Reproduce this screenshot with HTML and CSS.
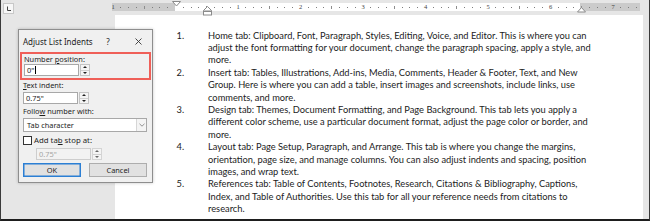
FILE: index.html
```html
<!DOCTYPE html>
<html>
<head>
<meta charset="utf-8">
<link rel="stylesheet" href="styles.css">
</head>
<body>
<div class="frame">
  <div class="topbar">
    <div class="tabsel">
      <svg width="9" height="9" viewBox="0 0 9 9"><path d="M3.5 2.5v4h3.5" fill="none" stroke="#444" stroke-width="1"/></svg>
    </div>
    <div class="ruler">
      <div class="scale">
        <span class="n">1</span><i></i><i></i><i></i><b></b><i></i><i></i><i></i>
        <span class="n"></span><i></i><i></i><i></i><b></b><i></i><i></i><i></i>
        <span class="n">1</span><i></i><i></i><i></i><b></b><i></i><i></i><i></i>
        <span class="n">2</span><i></i><i></i><i></i><b></b><i></i><i></i><i></i>
        <span class="n">3</span><i></i><i></i><i></i><b></b><i></i><i></i><i></i>
        <span class="n">4</span><i></i><i></i><i></i><b></b><i></i><i></i><i></i>
        <span class="n">5</span><i></i><i></i><i></i><b></b><i></i><i></i><i></i>
        <span class="n">6</span><i></i><i></i><i></i><b></b><i></i><i></i><i></i>
        <span class="n">7</span><i></i><i></i><i></i>
      </div>
      <svg class="marker first" width="9" height="6" viewBox="0 0 9 6"><path d="M0.5 0.5h8l-4 4.5z" fill="#fff" stroke="#8a8a8a"/></svg>
      <svg class="marker hang" width="9" height="10" viewBox="0 0 9 10"><path d="M4.5 0.5l4 4v0.5h-8v-0.5z" fill="#fff" stroke="#8a8a8a"/><rect x="0.5" y="5.5" width="8" height="3.5" fill="#fff" stroke="#8a8a8a"/></svg>
      <svg class="marker right" width="9" height="6" viewBox="0 0 9 6"><path d="M4.5 0.5l4 4.5h-8z" fill="#fff" stroke="#8a8a8a"/></svg>
    </div>
  </div>
  <div class="main">
    <div class="gutter-left"></div>
    <div class="page">
      <ol class="list">
        <li class="item"><span class="num">1.</span><span class="txt">Home tab: Clipboard, Font, Paragraph, Styles, Editing, Voice, and Editor. This is where you can<br>adjust the font formatting for your document, change the paragraph spacing, apply a style, and<br>more.</span></li>
        <li class="item"><span class="num">2.</span><span class="txt">Insert tab: Tables, Illustrations, Add-ins, Media, Comments, Header &amp; Footer, Text, and New<br>Group. Here is where you can add a table, insert images and screenshots, include links, use<br>comments, and more.</span></li>
        <li class="item"><span class="num">3.</span><span class="txt">Design tab: Themes, Document Formatting, and Page Background. This tab lets you apply a<br>different color scheme, use a particular document format, adjust the page color or border, and<br>more.</span></li>
        <li class="item"><span class="num">4.</span><span class="txt">Layout tab: Page Setup, Paragraph, and Arrange. This tab is where you change the margins,<br>orientation, page size, and manage columns. You can also adjust indents and spacing, position<br>images, and wrap text.</span></li>
        <li class="item"><span class="num">5.</span><span class="txt">References tab: Table of Contents, Footnotes, Research, Citations &amp; Bibliography, Captions,<br>Index, and Table of Authorities. Use this tab for all your reference needs from citations to<br>research.</span></li>
      </ol>
    </div>
    <div class="gutter-right"></div>
  </div>

  <div class="dialog">
    <div class="titlebar">
      <span class="title">Adjust List Indents</span>
      <span class="help">?</span>
      <span class="close">
        <svg width="7" height="7" viewBox="0 0 7 7"><path d="M0.5 0.5l6 6M6.5 0.5l-6 6" stroke="#333" stroke-width="0.9"/></svg>
      </span>
    </div>
    <div class="highlight">
      <div class="label">Number <u>p</u>osition:</div>
      <div class="spin-row">
        <div class="field">0"<span class="caret"></span></div>
        <div class="spinner"><span class="up"></span><span class="down"></span></div>
      </div>
    </div>
    <div class="body">
      <div class="label gap"><u>T</u>ext indent:</div>
      <div class="spin-row">
        <div class="field">0.75"</div>
        <div class="spinner"><span class="up"></span><span class="down"></span></div>
      </div>
      <div class="label follow">Follo<u>w</u> number with:</div>
      <div class="select">
        <span class="select-text">Tab character</span>
        <span class="select-btn"><svg width="6" height="4" viewBox="0 0 6 4"><path d="M0.5 0.8l2.5 2.4 2.5-2.4" fill="none" stroke="#777" stroke-width="0.8"/></svg></span>
      </div>
      <div class="check-row">
        <span class="checkbox"></span>
        <span class="check-label">Add ta<u>b</u> stop at:</span>
      </div>
      <div class="spin-row disabled">
        <div class="field">0.75"</div>
        <div class="spinner"><span class="up"></span><span class="down"></span></div>
      </div>
      <div class="buttons">
        <button class="btn default">OK</button>
        <button class="btn">Cancel</button>
      </div>
    </div>
  </div>
</div>
</body>
</html>
```

FILE: styles.css
```css
* { box-sizing: border-box; }
html, body { margin: 0; padding: 0; }
body { width: 650px; height: 221px; overflow: hidden; background: #e6e6e6; }

.frame {
  position: relative;
  width: 650px;
  height: 221px;
  border-left: 1px solid #3a3a3a;
  border-right: 1px solid #3a3a3a;
  border-bottom: 2px solid #1e1e1e;
  background: #e6e6e6;
  display: flex;
  flex-direction: column;
  overflow: hidden;
}

/* ---------- ruler ---------- */
.topbar {
  flex: none;
  height: 15px;
  display: flex;
  align-items: flex-start;
  padding: 3px 0 0 2px;
}
.tabsel {
  flex: none;
  width: 11px;
  height: 11px;
  background: #f7f7f7;
  border: 1px solid #c8c8c8;
  display: flex;
  align-items: center;
  justify-content: center;
}
.ruler {
  position: relative;
  flex: none;
  margin-left: 98px;
  width: 528px;
  height: 8px;
  background: linear-gradient(to right, #cbcbcb 0 63px, #fff 63px 468px, #cbcbcb 468px);
  overflow: visible;
}
.scale {
  display: flex;
  height: 8px;
  margin-left: -2.9px;
  width: 531px;
  overflow: hidden;
}
.scale > * {
  flex: none;
  width: 7.8125px;
  height: 8px;
  display: flex;
  align-items: center;
  justify-content: center;
}
.scale .n {
  font: 6.5px/8px "Liberation Serif", serif;
  color: #444;
}
.scale i::before {
  content: "";
  display: block;
  width: 1px;
  height: 1px;
  background: #7d7d7d;
}
.scale b::before {
  content: "";
  display: block;
  width: 1px;
  height: 3px;
  background: #8d8d8d;
}
.marker { position: absolute; display: block; }
.marker.first { left: 59.5px; top: -2px; }
.marker.hang { left: 90.5px; top: 3px; }
.marker.right { left: 464.5px; top: 4px; }

/* ---------- page ---------- */
.main {
  flex: 1;
  display: flex;
  min-height: 0;
}
.gutter-left { flex: none; width: 114px; }
.gutter-right { flex: none; width: 6px; }
.page {
  flex: none;
  width: 528px;
  background: #fff;
  padding: 14.5px 0 0 61.5px;
}
.list {
  margin: 0;
  padding: 0;
  list-style: none;
  font-family: "Lato", "Carlito", sans-serif;
  font-size: 9.3px;
  line-height: 12.4px;
  color: #1c1c1c;
}
.item { display: flex; }
.num { flex: none; width: 31.5px; }
.txt { flex: none; width: 380px; white-space: nowrap; }

/* ---------- dialog ---------- */
.dialog {
  position: absolute;
  left: 17px;
  top: 29px;
  width: 135px;
  border: 1px solid #8e8e8e;
  background: #f0f0f0;
  box-shadow: 0 0 3px rgba(0, 0, 0, 0.22);
  font-family: "Noto Sans", "Open Sans", sans-serif;
  font-size: 7.4px;
  color: #1e1e1e;
  padding-bottom: 5px;
}
.titlebar {
  height: 22px;
  display: flex;
  align-items: center;
  padding-left: 4px;
}
.title { font-size: 8px; }
.help { margin-left: auto; font-size: 8px; width: 6px; text-align: center; }
.close { margin-left: 24px; margin-right: 10px; display: flex; }

.highlight {
  margin: 0 1px;
  height: 28px;
  border: 2px solid #ef5f58;
  padding: 0 2px;
}
.label { line-height: 10px; }
.label.gap { height: 12px; }
.label.follow { margin-top: 2px; }
.body { padding: 0 5px 0 4px; }

.spin-row { display: flex; height: 12px; }
.field {
  width: 55px;
  height: 12px;
  background: #fff;
  border: 1px solid #a8a8a8;
  padding-left: 2px;
  line-height: 10px;
  display: flex;
  align-items: center;
}
.caret {
  display: inline-block;
  width: 1px;
  height: 8px;
  background: #000;
  margin-left: 0.5px;
}
.spinner {
  width: 10px;
  height: 12px;
  margin-left: 1px;
  border: 1px solid #c4c4c4;
  background: #f4f4f4;
  display: flex;
  flex-direction: column;
}
.spinner span {
  flex: 1;
  display: flex;
  align-items: center;
  justify-content: center;
}
.spinner .up { border-bottom: 1px solid #d0d0d0; }
.spinner .up::before {
  content: "";
  border-left: 2px solid transparent;
  border-right: 2px solid transparent;
  border-bottom: 2.5px solid #222;
}
.spinner .down::before {
  content: "";
  border-left: 2px solid transparent;
  border-right: 2px solid transparent;
  border-top: 2.5px solid #222;
}
.disabled { margin: 3px 0 0 13px; }
.disabled .field { background: #f2f2f2; border-color: #cdcdcd; color: #a5a5a5; }
.disabled .spinner { border-color: #d4d4d4; }
.disabled .spinner span::before { border-bottom-color: #666; border-top-color: #666; }

.select {
  margin-top: 2px;
  height: 14px;
  background: #fff;
  border: 1px solid #a8a8a8;
  display: flex;
  align-items: center;
}
.select-text { flex: 1; padding-left: 3px; }
.select-btn {
  width: 10px;
  height: 12px;
  border-left: 1px solid #d6d6d6;
  background: #f4f4f4;
  display: flex;
  align-items: center;
  justify-content: center;
}
.check-row {
  margin-top: 3px;
  height: 10px;
  display: flex;
  align-items: center;
}
.checkbox {
  width: 9px;
  height: 9px;
  border: 1px solid #333;
  background: #fff;
}
.check-label { margin-left: 2px; font-size: 7.8px; }

.buttons {
  margin-top: 3px;
  display: flex;
  gap: 8px;
}
.btn {
  width: 58px;
  height: 14px;
  padding: 0;
  border: 1px solid #adadad;
  background: #e1e1e1;
  font: inherit;
  color: #1e1e1e;
}
.btn.default { border-color: #2b7fd4; box-shadow: inset 0 0 0 0.5px #2b7fd4; }
u { text-decoration-thickness: 0.5px; text-underline-offset: 1px; }
```
